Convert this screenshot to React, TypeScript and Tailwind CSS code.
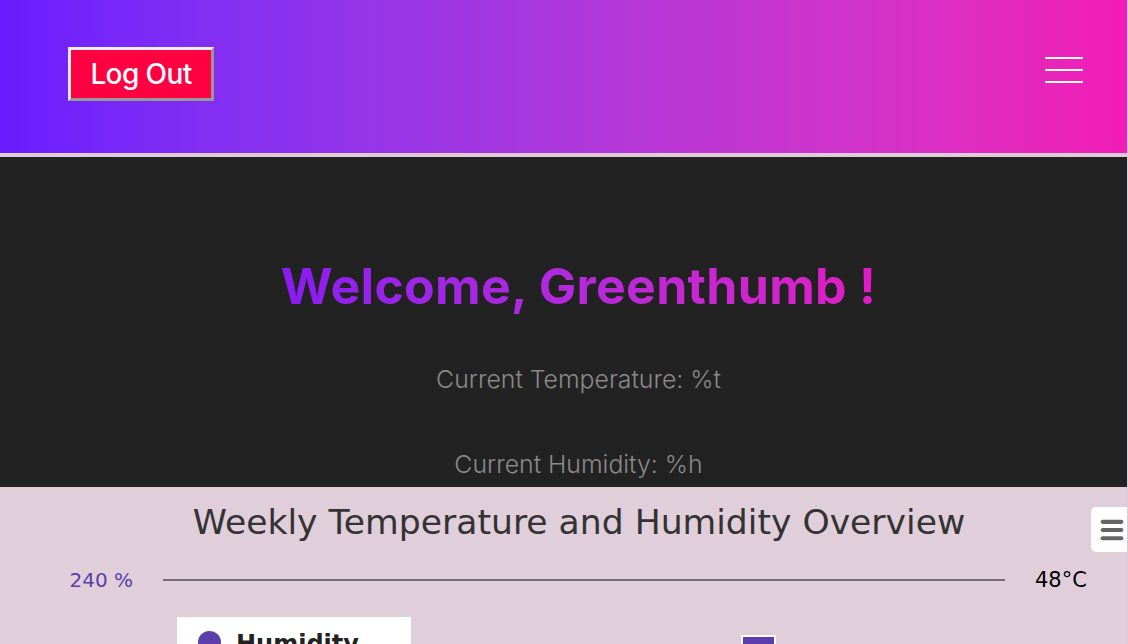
import { Menu } from "lucide-react"

const poppins = { fontFamily: "Inter, 'Noto Sans', sans-serif" }
const chartFont = { fontFamily: "'DejaVu Sans', 'Liberation Sans', sans-serif" }

export default function App() {
  return (
    <div className="min-h-screen w-[1128px] overflow-hidden bg-[#e0ccd9]">
      <div className="w-[1127px]">
        <header className="flex h-[153px] items-start justify-between bg-gradient-to-r from-[#6a1bff] to-[#f21bb6] pl-[68px] pr-[44px]">
          <button
            type="button"
            style={poppins}
            className="mt-[47px] h-[54px] w-[146px] border-[3px] border-t-[#eeeeee] border-l-[#eeeeee] border-b-[#999999] border-r-[#999999] bg-[#ff0040] text-[28px] font-medium tracking-[-0.6px] text-white"
          >
            Log Out
          </button>
          <div className="mt-[57px] flex w-[38px] flex-col gap-[10px]">
            <span className="h-[2px] w-full bg-white" />
            <span className="h-[2px] w-full bg-white" />
            <span className="h-[2px] w-full bg-white" />
          </div>
        </header>

        <section
          style={poppins}
          className="mt-[4px] flex h-[330px] flex-col items-center bg-[#222222] pl-[30px] pt-[98px]"
        >
          <h1 className="bg-gradient-to-r from-[#8a1bf0] to-[#e11bc4] bg-clip-text text-[50px] font-bold leading-[62px] tracking-[0.3px] text-transparent">
            Welcome, Greenthumb !
          </h1>
          <p className="mt-[46px] text-[24.8px] font-light leading-[32px] text-[#8a8a8a]">
            Current Temperature: %t
          </p>
          <p className="mt-[53px] text-[24.8px] font-light leading-[32px] text-[#8a8a8a]">
            Current Humidity: %h
          </p>
        </section>

        <section className="relative h-[157px] bg-[#e0cedb]" style={chartFont}>
          <h2 className="pl-[31px] pt-[14px] text-center text-[34.6px] leading-[42px] text-[#333333]">
            Weekly Temperature and Humidity Overview
          </h2>
          <div className="absolute right-0 top-[20px] flex h-[45px] w-[36px] items-center justify-center rounded-l-[5px] bg-white">
            <Menu className="ml-[6px] size-[28px] text-[#666666]" strokeWidth={3.5} />
          </div>
          <div className="mt-[25px] flex items-center">
            <span className="w-[133px] text-right text-[20px] leading-[24px] text-[#5b3fa8]">240 %</span>
            <div className="ml-[30px] h-[2px] w-[842px] bg-[#707070]" />
            <span className="ml-[30px] text-[21px] leading-[24px] text-black">48°C</span>
          </div>
          <div className="flex">
            <div className="ml-[177px] mt-[25px] flex h-[40px] w-[234px] items-start bg-white pl-[21px] pt-[14px]">
              <span className="size-[23px] shrink-0 rounded-full bg-[#5c3fad]" />
              <span className="ml-[15px] text-[24px] font-bold leading-[26px] text-[#222222]">
                Humidity
              </span>
            </div>
            <div className="ml-[330px] mt-[43px] h-[20px] w-[35px] border-2 border-white bg-[#5c3fad]" />
          </div>
        </section>
      </div>
    </div>
  )
}
